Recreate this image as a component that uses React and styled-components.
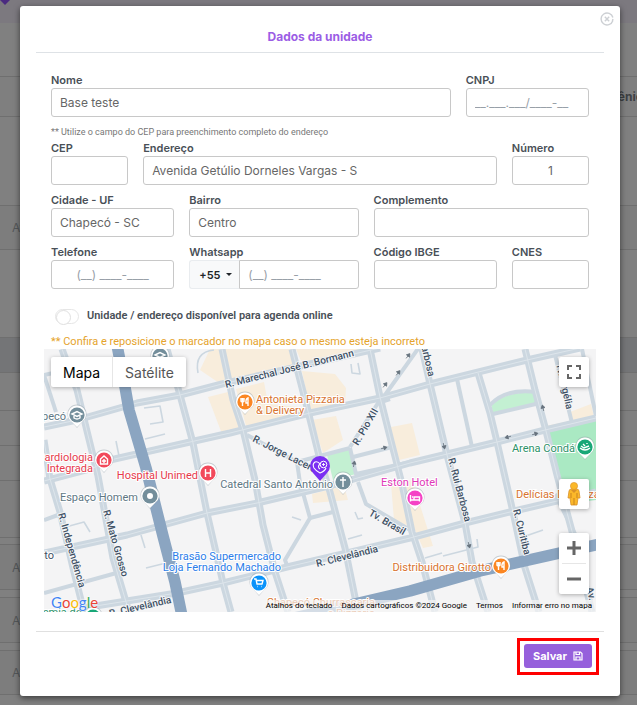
import styled, { createGlobalStyle, css } from 'styled-components';

const GlobalStyle = createGlobalStyle`
  * {
    box-sizing: border-box;
  }

  body {
    margin: 0;
    background: #808080;
    font-family: Inter, 'Liberation Sans', sans-serif;
  }

  button,
  input {
    font-family: inherit;
  }
`;

const Screen = styled.div`
  display: grid;
  grid-template-columns: minmax(0, 1fr);
`;

const Backdrop = styled.div`
  grid-area: 1 / 1;
  display: flex;
  flex-direction: column;
  overflow: hidden;
  background: #808080;
`;

const TopBar = styled.div`
  height: 23px;
  background: #7c797f;

  & svg {
    display: block;
  }
`;

const Band = styled.div`
  display: flex;
  align-items: center;
  justify-content: ${(props) => (props.$end ? 'flex-end' : 'flex-start')};
  width: ${(props) => (props.$end ? 'calc(100% + 6px)' : 'auto')};
  height: ${(props) => props.$height}px;
  padding-left: 12px;
  border-bottom: 1px solid #6f6f6f;
  background: ${(props) => props.$color || '#7f7f7f'};
  color: ${(props) => (props.$end ? '#3c4043' : '#55585a')};
  font-size: 12px;
  font-weight: ${(props) => (props.$end ? 700 : 400)};
`;

const Modal = styled.section`
  grid-area: 1 / 1;
  align-self: start;
  position: relative;
  margin: 6px 17px 9px 20px;
  padding: 23px 16px 21px;
  border-radius: 3px;
  background: #fff;
  box-shadow: 0 2px 6px rgba(0, 0, 0, 0.55);
`;

const Header = styled.header`
  padding-bottom: 7px;
  border-bottom: 1px solid #dee2e6;
`;

const Title = styled.h2`
  margin: 0;
  color: #9b5de5;
  font-size: 12px;
  font-weight: 700;
  line-height: 16px;
  text-align: center;
`;

const CloseButton = styled.button`
  position: absolute;
  top: 6px;
  right: 6px;
  width: 14px;
  height: 14px;
  padding: 0;
  border: 0;
  background: none;
  color: #cdd0d4;

  & svg {
    display: block;
  }
`;

const Body = styled.form`
  padding: 20px 8px 0;
`;

const Fields = styled.div`
  display: grid;
  grid-template-columns: repeat(12, minmax(0, 1fr));
  gap: 8px 15px;
  padding: 0 7px;
`;

const Field = styled.div`
  grid-column: span ${(props) => props.$span};
  min-width: 0;
`;

const Label = styled.label`
  display: block;
  height: 15px;
  color: #495057;
  font-size: 11px;
  font-weight: 600;
  line-height: 14px;
  white-space: nowrap;
`;

const Input = styled.input`
  display: block;
  width: 100%;
  min-width: 0;
  height: 29px;
  padding: 0 8px;
  border: 1px solid #c8c8c8;
  border-radius: 3px;
  background: #fff;
  color: #666;
  font-size: 12px;
  text-align: ${(props) => (props.$center ? 'center' : 'left')};

  &::placeholder {
    color: #98a0a8;
    opacity: 1;
  }
`;

const Hint = styled.p`
  grid-column: 1 / -1;
  margin: 0 0 -6px;
  color: #777;
  font-family: Roboto, 'Liberation Sans', sans-serif;
  font-size: 9px;
  line-height: 14px;
`;

const InputGroup = styled.div`
  display: flex;

  & ${Input} {
    border-radius: 0 3px 3px 0;
  }
`;

const CodeButton = styled.button`
  display: flex;
  flex: none;
  align-items: center;
  gap: 5px;
  width: 50px;
  padding: 0 9px;
  border: 1px solid #e9ecef;
  border-right: 0;
  border-radius: 3px 0 0 3px;
  background: #f8f9fa;
  color: #212529;
  font-size: 11px;
  font-weight: 600;
`;

const Caret = styled.span`
  border: 3px solid transparent;
  border-top-color: #212529;
  border-bottom: 0;
`;

const SwitchRow = styled.div`
  display: flex;
  align-items: center;
  gap: 8px;
  margin-top: 20px;
  padding: 0 11px;

  & ${Label} {
    font-family: Roboto, 'Liberation Sans', sans-serif;
  }
`;

const Switch = styled.input`
  appearance: none;
  width: 24px;
  height: 15px;
  margin: 0;
  border: 1px solid #e6e6e6;
  border-radius: 8px;
  background: #fff;

  &::before {
    content: '';
    display: block;
    width: 13px;
    height: 13px;
    border: 1px solid #e0e0e0;
    border-radius: 50%;
    background: #fff;
  }

  &:checked {
    background: #9b5de5;
  }

  &:checked::before {
    margin-left: auto;
  }
`;

const Warning = styled.p`
  margin: 10px 0 0;
  padding: 0 7px;
  color: #e5a32b;
  font-family: Roboto, 'Liberation Sans', sans-serif;
  font-size: 11px;
  line-height: 15px;
`;

const MapFrame = styled.div`
  position: relative;
  height: 263px;
  overflow: hidden;
  background: #f4f4f5;
  font-family: Roboto, 'Liberation Sans', sans-serif;
`;

const MapDrawing = styled.svg`
  display: block;
  width: 100%;
  height: 100%;
`;

const panel = css`
  position: absolute;
  border-radius: 2px;
  background: #fff;
  box-shadow: 0 1px 4px rgba(0, 0, 0, 0.3);
`;

const MapTypes = styled.div`
  ${panel}
  top: 8px;
  left: 7px;
  display: flex;
`;

const MapTypeButton = styled.button`
  height: 30px;
  padding: 0 12px;
  border: 0;
  background: none;
  color: ${(props) => (props.$active ? '#000' : '#565656')};
  font-family: Inter, 'Liberation Sans', sans-serif;
  font-size: 14px;

  & + & {
    border-left: 1px solid #e6e6e6;
  }
`;

const MapControls = styled.div`
  ${panel}
  top: ${(props) => props.$top}px;
  right: 7px;
  display: flex;
  flex-direction: column;
  width: 30px;
`;

const MapControl = styled.button`
  display: flex;
  align-items: center;
  justify-content: center;
  height: 30px;
  padding: 0;
  border: 0;
  background: none;
  color: #666;
`;

const Divider = styled.span`
  height: 1px;
  margin: 0 3px;
  background: #e6e6e6;
`;

const GoogleLogo = styled.a`
  position: absolute;
  bottom: 0;
  left: 7px;
  font-family: Lato, 'Open Sans', sans-serif;
  font-size: 15px;
  line-height: 20px;
  text-decoration: none;
  text-shadow: 0 0 2px #fff, 0 0 2px #fff;
`;

const Letter = styled.span`
  color: ${(props) => props.$color};
`;

const MapTerms = styled.div`
  position: absolute;
  right: 0;
  bottom: 0;
  display: flex;
  gap: 9px;
  padding: 0 4px;
  background: rgba(245, 245, 245, 0.7);
  font-size: 8px;
  line-height: 12px;

  & a,
  & button {
    padding: 0;
    border: 0;
    background: none;
    color: #000;
    font-size: 8px;
    line-height: 12px;
    text-decoration: none;
  }
`;

const Footer = styled.footer`
  display: flex;
  justify-content: flex-end;
  margin-top: 19px;
  padding: 6px 5px 0;
  border-top: 1px solid #e0e0e0;
`;

const Highlight = styled.div`
  padding: 3px 4px 4px;
  border: 3px solid #fe0000;
`;

const SaveButton = styled.button`
  display: flex;
  align-items: center;
  gap: 6px;
  height: 24px;
  padding: 0 9px;
  border: 0;
  border-radius: 3px;
  background: #9660dc;
  color: #fff;
  font-size: 11px;
  font-weight: 700;
`;

const BLOCKS = [
  'M200 370 L210 349 H292 L299 367 L222 385 Z',
  'M296 349 H368 L363 351 L303 366 Z',
  'M208 397 L228 392 L240 430 L222 434 Z',
  'M236 389 L264 382 L268 404 L309 408 L309 412 L246 426 Z',
  'M302 371 L335 374 L346 388 L345 404 L310 411 Z',
  'M312 420 L336 416 L343 440 L323 453 Z',
  'M386 428 L412 423 L420 455 L395 461 Z',
  'M391 484 L412 480 L433 546 L423 548 L414 528 L394 520 Z',
  'M312 494 L344 486 L348 500 L313 503 Z',
  'M318 470 L328 468 L330 484 L320 484 Z',
  'M570 412 L591 404 L594 417 L548 429 L545 426 L570 421 Z',
];

const PARKS = [
  { d: 'M491 404 Q510 390 536 393 L540 403 L493 413 Z', color: '#c3f0d2' },
  { d: 'M549 431 L596 419 V500 L564 504 Z', color: '#aae9c3' },
  { d: 'M327 455 L350 449 L356 474 L333 480 Z', color: '#c3f0d2' },
];

const SMALL_ROADS = [
  'M44 375 L62 371',
  'M44 375 L56 412',
  'M44 520 L58 515',
  'M44 593 L120 572',
  'M247 435 L297 462 L350 448',
  'M350 447 L378 403 L390 399',
  'M385 395 L420 346',
  'M353 457 L392 447',
  'M350 448 L356 474 L420 460',
  'M457 379 L472 447',
  'M555 355 L572 423',
  'M582 349 L596 416',
  'M490 405 Q506 388 536 392',
  'M493 414 L540 403',
  'M358 482 L366 504 L412 531',
  'M303 493 L310 518 L285 560 L288 568',
  'M310 518 L333 512',
  'M297 462 L301 490',
  'M555 494 L578 540',
];

const LANES = [
  'M144 408 L160 406 L163 422 L150 424',
  'M145 439 L165 434',
  'M119 456 L116 441',
  'M62 528 L84 522 L90 532',
  'M141 535 L145 548',
  'M146 568 L166 563',
  'M198 373 Q194 352 214 350',
  'M351 364 L352 373 L360 374 L358 363',
  'M292 517 L301 520',
  'M355 512 L358 519 L363 518',
  'M348 539 L362 535',
  'M425 558 L442 553',
  'M443 556 L478 547 L477 539',
  'M520 538 L543 530',
];

const ROADS = [
  'M44 427 L77 420 L137 403 L180 395 L222 384 L380 348',
  'M44 481 L93 468 L110 460 L230 433 L310 413 L380 398 L430 384 L527 360 L580 348',
  'M44 553 L127 535 L207 513 L257 503 L333 485 L410 463 L497 442 L545 430 L596 418',
  'M83 608 L177 593 L223 583 L287 567 L347 553 L410 538 L465 523 L510 512 L596 492',
  'M62 349 L77 390 L85 423 L98 476 L113 558 L129 612',
  'M44 440 L50 479 L60 512 L73 568 L84 612',
  'M167 349 L180 395 L193 443 L207 513 L223 583 L231 612',
  'M222 349 L233 400 L243 430 L255 480 L263 525 L275 572 L288 612',
  'M292 349 L307 407 L320 460 L330 492 L345 548 L358 612',
  'M370 349 L380 397 L390 437 L402 484 L412 532 L422 562 L435 612',
  'M422 349 L430 384 L447 455 L465 523 L472 562 L488 612',
  'M478 373 L490 413 L497 442 L513 512 L525 568 L539 612',
  'M525 349 L535 390 L545 427 L557 475 L573 535 L592 612',
];

const HIGHWAYS = [
  'M117 345 L125 387 L129 410 L146 468 L163 536 L175 582 L182 616',
  'M290 619 L363 602 L410 591 L480 571 L600 544',
];

const STREET_NAMES = [
  { text: 'R. Marechal José B. Bormann', x: 226, y: 388, angle: -14 },
  { text: 'R. Jorge Lacerda', x: 252, y: 441, angle: 27 },
  { text: 'R. Pio XII', x: 358, y: 446, angle: -60 },
  { text: 'Tv. Brasil', x: 368, y: 515, angle: 30 },
  { text: 'R. Clevelândia', x: 317, y: 567, angle: -14 },
  { text: 'R. Clevelândia', x: 110, y: 617, angle: -13 },
  { text: 'R. Independência', x: 58, y: 514, angle: 74 },
  { text: 'R. Mato Grosso', x: 103, y: 511, angle: 74 },
  { text: 'R. Rui Barbosa', x: 448, y: 459, angle: 75 },
  { text: 'R. Curitiba', x: 513, y: 510, angle: 76 },
  { text: 'Barbosa', x: 420, y: 341, angle: 77 },
  { text: 'Tv. Argélia', x: 556, y: 364, angle: 77 },
  { text: 'Av.', x: 586, y: 588, angle: 75 },
];

const PLACES = [
  { lines: ['Antonieta Pizzaria', '& Delivery'], x: 256, y: 403, color: '#d8732f' },
  { lines: ['Chapecó'], x: 66, y: 420, color: '#5e7783', anchor: 'end' },
  { lines: ['Cardiologia', 'Integrada'], x: 93, y: 461, color: '#e6394b', anchor: 'end' },
  { lines: ['Hospital Unimed'], x: 198, y: 479, color: '#e6394b', anchor: 'end' },
  { lines: ['Espaço Homem'], x: 138, y: 501, color: '#5e7783', anchor: 'end' },
  { lines: ['Catedral Santo Antônio'], x: 333, y: 488, color: '#5e7783', anchor: 'end' },
  { lines: ['Eston Hotel'], x: 381, y: 486, color: '#e038b8' },
  { lines: ['Arena Condá'], x: 575, y: 452, color: '#2d9168', anchor: 'end' },
  { lines: ['Delícias Da Pizza'], x: 516, y: 498, color: '#d8732f' },
  { lines: ['Distribuidora Girotto'], x: 491, y: 571, color: '#d8732f', anchor: 'end' },
  { lines: ['Brasão Supermercado', 'Loja Fernando Machado'], x: 281, y: 560, color: '#2b7de9', anchor: 'end' },
  { lines: ['Chapecó Churrascaria', 'e Pizzaria'], x: 375, y: 606, color: '#d8732f', anchor: 'end' },
  { lines: ['Peroto'], x: 54, y: 559, color: '#3e5064', anchor: 'end' },
  { lines: ['Academia do'], x: 82, y: 616, color: '#2d9168', anchor: 'end' },
];

const GLYPHS = {
  fork: 'M-4 -4 V-1 Q-4 0 -2.5 0 V4 M-1 -4 V-1 Q-1 0 -2.5 0 V-4 M3 4 V-4 Q0.5 -3 1 1 H3',
  hospital: 'M-2.5 -4 V4 M2.5 -4 V4 M-2.5 0 H2.5',
  clinic: 'M-3.5 4 V-1 L0 -4 L3.5 -1 V4 Z M0 -1 V3 M-2 1 H2',
  school: 'M-5 -1 L0 -3.5 L5 -1 L0 1.5 Z M-3 1 V3 Q0 5 3 3 V1',
  dot: 'M-1.5 0 A1.5 1.5 0 1 0 1.5 0 A1.5 1.5 0 1 0 -1.5 0 Z',
  cross: 'M0 -5 V5 M-3 -2 H3',
  bed: 'M-4.5 -3 V3.5 M-4.5 2 H4.5 V3.5 M4.5 2 V-1 H-1 V2 M-3 -1 H-2',
  arena: 'M-5 1 Q0 5 5 1 M-4 -1 L-1 1 L4 -1 M2 -4 V-3 M-2 -3 L0 -1',
  cart: 'M-5 -4 H-3 L-2 1 H3 L4 -2.5 H-2.5 M-1.5 3.5 H-1 M2.5 3.5 H3',
};

const PINS = [
  { glyph: 'fork', x: 245, y: 402, color: '#fb8622' },
  { glyph: 'school', x: 77, y: 415, color: '#738e9b' },
  { glyph: 'school', x: 160, y: 356, color: '#738e9b' },
  { glyph: 'clinic', x: 104, y: 460, color: '#f2495b' },
  { glyph: 'hospital', x: 208, y: 473, color: '#f2495b' },
  { glyph: 'dot', x: 150, y: 496, color: '#738e9b' },
  { glyph: 'cross', x: 343, y: 482, color: '#738e9b' },
  { glyph: 'bed', x: 415, y: 498, color: '#f543c5' },
  { glyph: 'arena', x: 585, y: 447, color: '#18a777' },
  { glyph: 'fork', x: 501, y: 566, color: '#fb8622' },
  { glyph: 'cart', x: 259, y: 583, color: '#0a93fa' },
  { glyph: 'dot', x: 93, y: 617, color: '#18a777' },
];

// small one-way arrows printed over the roads
const ARROWS = [
  { x: 385, y: 385, angle: -52 },
  { x: 398, y: 373, angle: -52 },
  { x: 408, y: 356, angle: -52 },
  { x: 384, y: 448, angle: -14 },
  { x: 354, y: 464, angle: -80 },
  { x: 444, y: 446, angle: 76 },
  { x: 508, y: 437, angle: 166 },
  { x: 535, y: 434, angle: -14 },
  { x: 543, y: 408, angle: -104 },
  { x: 469, y: 545, angle: 76 },
];

function Lines({ paths, color, width }) {
  return (
    <g fill="none" stroke={color} strokeWidth={width} strokeLinejoin="round">
      {paths.map((d) => (
        <path key={d} d={d} />
      ))}
    </g>
  );
}

function Pin({ x, y, color, glyph }) {
  return (
    <g transform={`translate(${x} ${y})`}>
      <path d="M0 13 L-5 7 A9.5 9.5 0 1 1 5 7 Z" fill="#9aa5ad" opacity="0.5" />
      <path d="M0 12 L-5 7 A9 9 0 1 1 5 7 Z" fill="#fff" />
      <circle r="7.6" fill={color} />
      <path
        d={GLYPHS[glyph]}
        fill="none"
        stroke="#fff"
        strokeWidth={glyph === 'dot' ? 3 : 1.4}
      />
    </g>
  );
}

function CityMap() {
  return (
    <MapDrawing
      viewBox="44 349 552 263"
      preserveAspectRatio="xMidYMid slice"
      role="img"
      aria-label="Mapa"
    >
      {BLOCKS.map((d) => (
        <path key={d} d={d} fill="#f8eddc" />
      ))}
      {PARKS.map(({ d, color }) => (
        <path key={d} d={d} fill={color} />
      ))}
      <Lines paths={LANES} color="#ccd7e0" width="1.6" />
      <Lines paths={SMALL_ROADS} color="#ccd7e0" width="4" />
      <Lines paths={ROADS} color="#ccd7e0" width="7" />
      <Lines paths={ROADS} color="#dde5eb" width="1" />
      <Lines paths={HIGHWAYS} color="#8ba5c1" width="11.5" />
      {ARROWS.map(({ x, y, angle }) => (
        <path
          key={`${x}-${y}`}
          d="M-3 0 H2 M0 -2 L3 0 L0 2 Z"
          transform={`translate(${x} ${y}) rotate(${angle})`}
          fill="#66727d"
          stroke="#66727d"
          strokeWidth="0.8"
        />
      ))}
      <g
        fontSize="10"
        fontWeight="500"
        fill="#3e5064"
        stroke="#f4f6f8"
        strokeWidth="2"
        paintOrder="stroke"
      >
        {STREET_NAMES.map(({ text, x, y, angle }) => (
          <text
            key={`${text}-${x}`}
            transform={`translate(${x} ${y}) rotate(${angle})`}
          >
            {text}
          </text>
        ))}
      </g>
      <g fontSize="11" stroke="#fff" strokeWidth="2" paintOrder="stroke">
        {PLACES.map(({ lines, x, y, color, anchor }) => (
          <text key={lines[0]} y={y} fill={color} textAnchor={anchor}>
            {lines.map((line, index) => (
              <tspan key={line} x={x} dy={index * 11}>
                {line}
              </tspan>
            ))}
          </text>
        ))}
      </g>
      {PINS.map((pin) => (
        <Pin key={`${pin.x}-${pin.y}`} {...pin} />
      ))}
      <g transform="translate(320 467)">
        <path
          d="M0 14 L-7 6 Q-10 3 -10 -1 A10 10 0 0 1 10 -1 Q10 3 7 6 Z"
          fill="#7b2ff2"
        />
        <path
          d="M0 -3 Q-2 -6 -5 -5 Q-8 -3 -6 1 Q-4 4 0 6 Q5 4 6 1 M0 -3 Q-3 0 0 2"
          fill="none"
          stroke="#fff"
          strokeWidth="1.1"
        />
        <circle cx="3.5" cy="-2.5" r="3.3" fill="none" stroke="#fff" />
        <path d="M2 -2.5 H5 M3.5 -4 V-1" stroke="#fff" strokeWidth="0.9" />
      </g>
    </MapDrawing>
  );
}

function TextField({ id, label, span, ...inputProps }) {
  return (
    <Field $span={span}>
      <Label htmlFor={id}>{label}</Label>
      <Input id={id} type="text" {...inputProps} />
    </Field>
  );
}

function MapView() {
  return (
    <MapFrame>
      <CityMap />
      <MapTypes>
        <MapTypeButton type="button" $active>
          Mapa
        </MapTypeButton>
        <MapTypeButton type="button">Satélite</MapTypeButton>
      </MapTypes>
      <MapControls $top={8}>
        <MapControl type="button" aria-label="Tela cheia">
          <svg width="14" height="14" viewBox="0 0 14 14">
            <path
              d="M1 5 V1 H5 M9 1 H13 V5 M13 9 V13 H9 M5 13 H1 V9"
              fill="none"
              stroke="#666"
              strokeWidth="2"
            />
          </svg>
        </MapControl>
      </MapControls>
      <MapControls $top={130}>
        <MapControl type="button" aria-label="Street View">
          <svg width="14" height="24" viewBox="0 0 14 24">
            <path
              d="M2 9 Q2 7 5 7 H9 Q12 7 12 9 L13 16 L11 16 L10 23 H4 L3 16 L1 16 Z"
              fill="#fbb829"
              stroke="#d8912a"
              strokeWidth="0.8"
            />
            <path d="M4 11 V16 M10 11 V16 M7 16 V23" stroke="#c98320" />
            <path d="M4 8 H10 L7 11 Z" fill="#d8912a" />
            <circle cx="7" cy="4" r="3.6" fill="#fbb829" stroke="#d8912a" strokeWidth="0.6" />
          </svg>
        </MapControl>
      </MapControls>
      <MapControls $top={184}>
        <MapControl type="button" aria-label="Aumentar zoom">
          <svg width="14" height="14" viewBox="0 0 14 14">
            <path d="M7 0 V14 M0 7 H14" stroke="#666" strokeWidth="3" />
          </svg>
        </MapControl>
        <Divider />
        <MapControl type="button" aria-label="Diminuir zoom">
          <svg width="14" height="14" viewBox="0 0 14 14">
            <path d="M0 7 H14" stroke="#666" strokeWidth="3" />
          </svg>
        </MapControl>
      </MapControls>
      <GoogleLogo href="#google" aria-label="Google">
        <Letter $color="#4285f4">G</Letter>
        <Letter $color="#ea4335">o</Letter>
        <Letter $color="#fbbc05">o</Letter>
        <Letter $color="#4285f4">g</Letter>
        <Letter $color="#34a853">l</Letter>
        <Letter $color="#ea4335">e</Letter>
      </GoogleLogo>
      <MapTerms>
        <button type="button">Atalhos do teclado</button>
        <span>Dados cartográficos ©2024 Google</span>
        <a href="#termos">Termos</a>
        <a href="#erro">Informar erro no mapa</a>
      </MapTerms>
    </MapFrame>
  );
}

function PageBehind() {
  return (
    <Backdrop aria-hidden="true">
      <TopBar>
        <svg width="10" height="5" viewBox="0 0 10 5">
          <path d="M0 0 H10 L5 5 Z" fill="#4b2a80" />
        </svg>
      </TopBar>
      <Band $height={54} $color="#808080" />
      <Band $height={40} $end>
        Convênio
      </Band>
      <Band $height={89} $color="#808080" />
      <Band $height={44} $color="#7d7d7d">
        Av
      </Band>
      <Band $height={88} $color="#808080" />
      <Band $height={35} $color="#747577" />
      <Band $height={38} />
      <Band $height={35} />
      <Band $height={35} />
      <Band $height={57} />
      <Band $height={7} $color="#808080" />
      <Band $height={45} $color="#7d7d7d">
        Av
      </Band>
      <Band $height={8} $color="#808080" />
      <Band $height={45} $color="#7d7d7d">
        Av
      </Band>
      <Band $height={8} $color="#808080" />
      <Band $height={44} $color="#7d7d7d">
        Av
      </Band>
    </Backdrop>
  );
}

export default function App() {
  return (
    <>
      <GlobalStyle />
      <Screen>
        <PageBehind />
        <Modal role="dialog" aria-labelledby="modal-title">
          <CloseButton type="button" aria-label="Fechar">
            <svg width="14" height="14" viewBox="0 0 14 14">
              <path
                d="M12.8 8.8 A6 6 0 1 1 12.9 5.5 M13 7 L12.3 9.5 M4.8 4.8 L9.2 9.2 M9.2 4.8 L4.8 9.2"
                fill="none"
                stroke="currentColor"
                strokeWidth="1.4"
              />
            </svg>
          </CloseButton>
          <Header>
            <Title id="modal-title">Dados da unidade</Title>
          </Header>
          <Body id="unit-form">
            <Fields>
              <TextField id="name" label="Nome" span={9} defaultValue="Base teste" />
              <TextField id="cnpj" label="CNPJ" span={3} placeholder="__.___.___/____-__" />
              <Hint>** Utilize o campo do CEP para preenchimento completo do endereço</Hint>
              <TextField id="cep" label="CEP" span={2} />
              <TextField
                id="address"
                label="Endereço"
                span={8}
                defaultValue="Avenida Getúlio Dorneles Vargas - S"
              />
              <TextField id="number" label="Número" span={2} defaultValue="1" $center />
              <TextField id="city" label="Cidade - UF" span={3} defaultValue="Chapecó - SC" />
              <TextField id="district" label="Bairro" span={4} defaultValue="Centro" />
              <TextField id="complement" label="Complemento" span={5} />
              <TextField
                id="phone"
                label="Telefone"
                span={3}
                placeholder="(__) ____-____"
                $center
              />
              <Field $span={4}>
                <Label htmlFor="whatsapp">Whatsapp</Label>
                <InputGroup>
                  <CodeButton type="button">
                    +55
                    <Caret />
                  </CodeButton>
                  <Input id="whatsapp" type="text" placeholder="(__) ____-____" />
                </InputGroup>
              </Field>
              <TextField id="ibge" label="Código IBGE" span={3} />
              <TextField id="cnes" label="CNES" span={2} />
            </Fields>
            <SwitchRow>
              <Switch id="online" type="checkbox" />
              <Label htmlFor="online">
                Unidade / endereço disponível para agenda online
              </Label>
            </SwitchRow>
            <Warning>
              ** Confira e reposicione o marcador no mapa caso o mesmo esteja incorreto
            </Warning>
            <MapView />
          </Body>
          <Footer>
            <Highlight>
              <SaveButton type="submit" form="unit-form">
                Salvar
                <svg width="10" height="10" viewBox="0 0 10 10">
                  <path
                    d="M1 1 H7.5 L9 2.5 V9 H1 Z M3 1 V3.5 H6.5 V1 M3 9 V6 H7 V9"
                    fill="none"
                    stroke="#fff"
                    strokeWidth="1.2"
                  />
                </svg>
              </SaveButton>
            </Highlight>
          </Footer>
        </Modal>
      </Screen>
    </>
  );
}
